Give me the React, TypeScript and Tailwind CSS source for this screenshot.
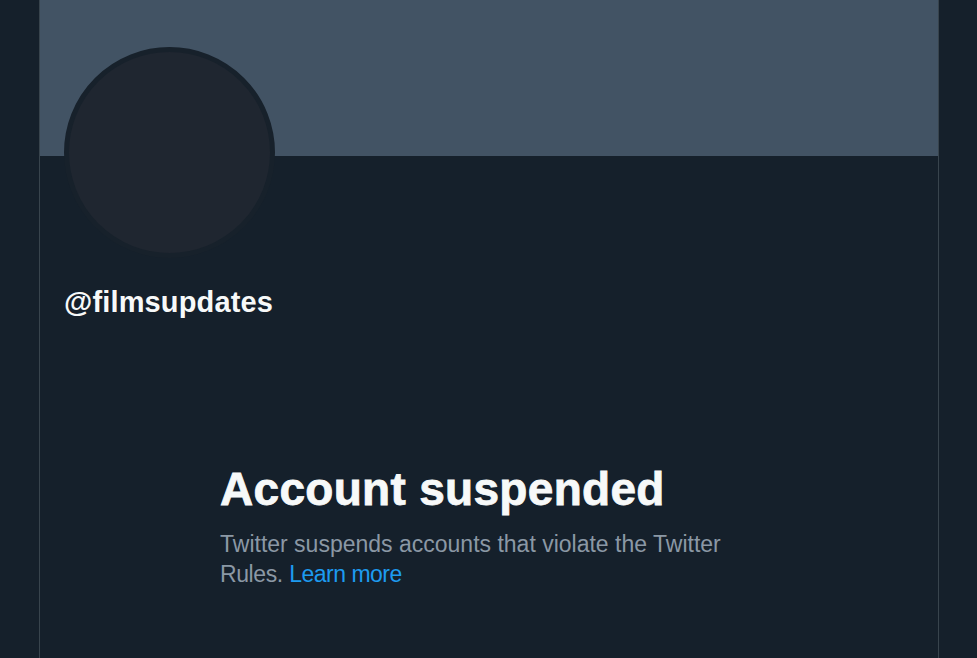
import React from "react";

export default function App() {
  return (
    <div
      className="flex min-h-[658px] w-full bg-[#15202b] text-white"
      style={{ fontFamily: '"Liberation Sans", Arial, sans-serif' }}
    >
      <div className="w-[39px] shrink-0" />
      <main className="flex w-[900px] shrink-0 flex-col border-x border-[#38444d]">
        <div className="h-[156px] w-full bg-[#425364]" />
        <div className="px-6">
          <div className="-mt-[109px] h-[211px] w-[211px] rounded-full border-[5px] border-[#17212b] bg-[#1f2630]" />
          <div className="mt-[27px] text-[29px] font-bold leading-[35px] tracking-[0.15px] text-[#f7f9f9]">
            @filmsupdates
          </div>
        </div>
        <div className="mx-auto mt-[141px] w-[538px]">
          <h1 className="text-[46px] font-bold leading-[56px] tracking-[0.3px] text-[#f7f9f9] [-webkit-text-stroke:0.8px_#f7f9f9]">
            Account suspended
          </h1>
          <p className="mt-[12px] text-[23px] leading-[30px] text-[#8b98a5]">
            Twitter suspends accounts that violate the Twitter{" "}
            <span className="tracking-[-0.4px]">Rules.</span>{" "}
            <span className="tracking-[-0.5px] text-[#1d9bf0]">Learn more</span>
          </p>
        </div>
      </main>
      <div className="flex-1" />
    </div>
  );
}
